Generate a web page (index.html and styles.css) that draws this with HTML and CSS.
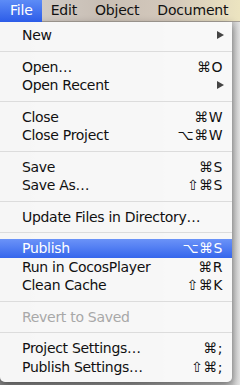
FILE: index.html
```html
<!DOCTYPE html>
<html lang="en">
<head>
  <meta charset="utf-8">
  <title>File menu</title>
  <link rel="stylesheet" href="styles.css">
</head>
<body>

<div class="menubar">
  <span class="title active">File</span>
  <span class="title">Edit</span>
  <span class="title">Object</span>
  <span class="title">Document</span>
</div>

<div class="desktop">
  <div class="menu">
    <div class="item"><span>New</span><span class="arrow"></span></div>
    <div class="sep"></div>
    <div class="item"><span>Open…</span><span class="key">⌘O</span></div>
    <div class="item"><span>Open Recent</span><span class="arrow"></span></div>
    <div class="sep"></div>
    <div class="item"><span>Close</span><span class="key">⌘W</span></div>
    <div class="item"><span>Close Project</span><span class="key">⌥⌘W</span></div>
    <div class="sep"></div>
    <div class="item"><span>Save</span><span class="key">⌘S</span></div>
    <div class="item"><span>Save As…</span><span class="key">⇧⌘S</span></div>
    <div class="sep"></div>
    <div class="item"><span>Update Files in Directory…</span></div>
    <div class="sep"></div>
    <div class="item selected"><span>Publish</span><span class="key">⌥⌘S</span></div>
    <div class="item"><span>Run in CocosPlayer</span><span class="key">⌘R</span></div>
    <div class="item"><span>Clean Cache</span><span class="key">⇧⌘K</span></div>
    <div class="sep"></div>
    <div class="item disabled"><span>Revert to Saved</span></div>
    <div class="sep"></div>
    <div class="item"><span>Project Settings…</span><span class="key">⌘;</span></div>
    <div class="item"><span>Publish Settings…</span><span class="key">⇧⌘;</span></div>
  </div>
</div>

</body>
</html>
```

FILE: styles.css
```css
body {
  margin: 0;
  width: 240px;
  height: 385px;
  overflow: hidden;
  font-family: 'DejaVu Sans', sans-serif;
  font-size: 14px;
  background: linear-gradient(to right, #8a8a8a 0, #9c9c9c 130px, #c8c8c8 232px, #e4e4e4 240px);
}
.menubar {
  height: 22px;
  display: flex;
  align-items: center;
  background: linear-gradient(to right, #d8d4d0 0, #c9bfb5 100px, #d3c8bb 170px, #ece4c0 240px);
  border-bottom: 1px solid #a8a29a;
  box-sizing: border-box;
  color: #111;
  white-space: nowrap;
  letter-spacing: -0.2px;
}
.title {
  height: 22px;
  line-height: 21px;
  padding: 0 9px;
}
.title.active {
  background: linear-gradient(#5d8cf6, #2c5ce8);
  color: #fff;
  padding: 0 9px 0 10px;
}
.desktop {
  height: 363px;
}
.menu {
  width: 232px;
  background: rgba(250, 250, 250, 0.97);
  border-radius: 0 0 5px 5px;
  box-shadow: 0 3px 8px rgba(0,0,0,0.45);
  padding: 4px 0 6px;
  color: #111;
}
.item {
  height: 18.5px;
  line-height: 18.5px;
  display: flex;
  justify-content: space-between;
  align-items: center;
  padding: 0 9px 0 22px;
  white-space: nowrap;
  letter-spacing: -0.3px;
}
.key {
  letter-spacing: 0.5px;
}
.arrow {
  width: 0;
  height: 0;
  border-top: 4px solid transparent;
  border-bottom: 4px solid transparent;
  border-left: 7px solid #444;
  margin-right: -1px;
}
.selected {
  background: linear-gradient(#6b93f8, #3566ec);
  color: #fff;
}
.disabled {
  color: #a8a8a8;
}
.sep {
  height: 1px;
  background: #dcdcdc;
  margin: 6px 0;
}
```
